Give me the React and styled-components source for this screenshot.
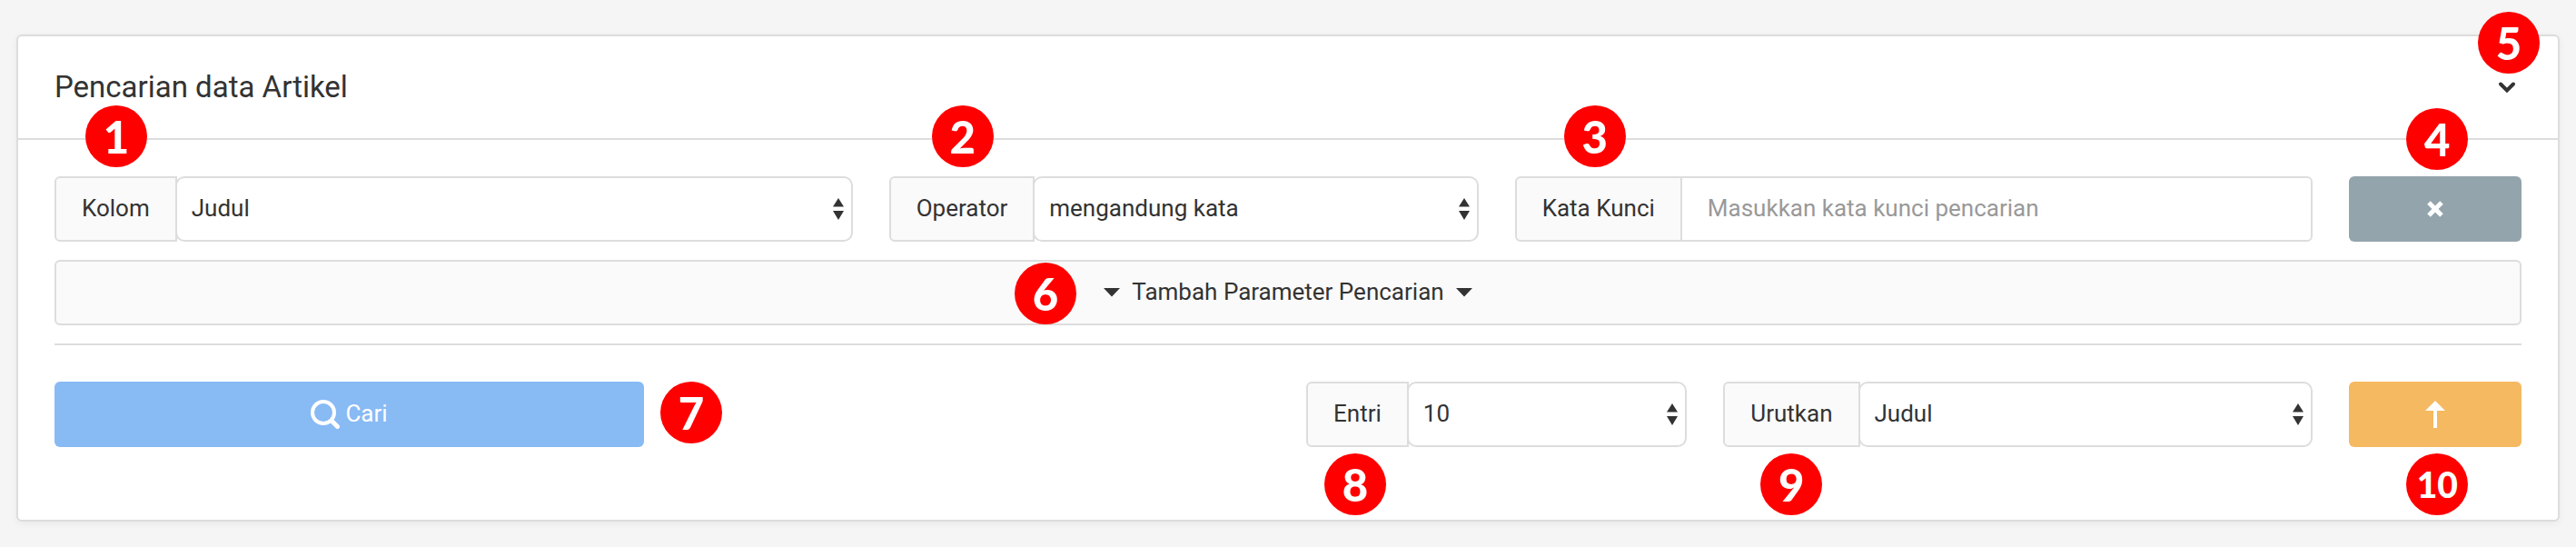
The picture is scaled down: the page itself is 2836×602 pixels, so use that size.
import React from "react";
import styled, { createGlobalStyle } from "styled-components";

const GlobalStyle = createGlobalStyle`
  *, *::before, *::after { box-sizing: border-box; }
  body {
    margin: 0;
    background: #f5f5f5;
    color: #333;
    font: 400 26px/40px Roboto, "Liberation Sans", sans-serif;
  }
`;

const Page = styled.main`
  padding: 38px 18px 28px;
`;

const Panel = styled.section`
  background: #fff;
  border: 2px solid #ddd;
  border-radius: 6px;
  box-shadow: 0 2px 8px rgba(0, 0, 0, 0.06);
`;

const PanelHeader = styled.header`
  display: flex;
  align-items: center;
  justify-content: space-between;
  padding: 30px 40px;
  border-bottom: 2px solid #ddd;
`;

const PanelTitle = styled.h1`
  margin: 0;
  font-size: 33px;
  line-height: 52px;
  font-weight: 400;
`;

const PanelBody = styled.form`
  padding: 40px 40px 80px;
`;

const Row = styled.div`
  display: grid;
  grid-template-columns: repeat(12, minmax(0, 1fr));
  column-gap: 40px;
`;

const Cell = styled.div`
  position: relative;
  display: flex;
  height: 72px;
  grid-column: ${(p) => (p.$start ? `${p.$start} / ` : "")}span ${(p) => p.$span};
`;

const Marker = styled.span`
  position: absolute;
  left: ${(p) => p.$left};
  top: ${(p) => p.$top};
  z-index: 1;
  display: flex;
  align-items: center;
  justify-content: center;
  width: 68px;
  height: 68px;
  border-radius: 50%;
  background: #f00;
  color: #fff;
  font-family: Lato, "Liberation Sans", sans-serif;
  font-weight: 900;
  font-size: ${(p) => (p.$small ? "39px" : "49px")};
  pointer-events: none;
`;

const Addon = styled.label`
  display: flex;
  align-items: center;
  padding: 0 28px 2px;
  border: 2px solid #ddd;
  border-radius: 6px 0 0 6px;
  background: #fafafa;
  white-space: nowrap;
`;

const SelectWrap = styled.div`
  position: relative;
  display: flex;
  flex: 1;
  min-width: 0;
  margin-left: -2px;
`;

const Select = styled.select`
  appearance: none;
  width: 100%;
  padding: 0 40px 2px 16px;
  border: 2px solid #ddd;
  border-radius: 10px;
  background: #fff;
  color: inherit;
  font: inherit;
`;

const SelectArrows = styled.svg`
  position: absolute;
  right: 10px;
  top: 24px;
  width: 12px;
  height: 24px;
  fill: #333;
  pointer-events: none;
`;

const TextInput = styled.input`
  flex: 1;
  min-width: 0;
  margin-left: -2px;
  padding: 0 28px 2px;
  border: 2px solid #ddd;
  border-radius: 0 6px 6px 0;
  background: #fff;
  color: inherit;
  font: inherit;
  &::placeholder {
    color: #999;
    opacity: 1;
  }
`;

const buttonColors = {
  primary: "#88baf4",
  muted: "#94a4ac",
  warning: "#f5b961",
};

const Button = styled.button`
  display: flex;
  align-items: center;
  justify-content: center;
  gap: 6px;
  width: 100%;
  padding: 0;
  border: 0;
  border-radius: 6px;
  background: ${(p) => buttonColors[p.$tone]};
  color: #fff;
  font: inherit;
`;

const ButtonText = styled.span`
  padding-bottom: 2px;
`;

const AddBar = styled.div`
  position: relative;
  margin: 20px 0;
`;

const AddButton = styled.button`
  display: flex;
  align-items: center;
  justify-content: center;
  gap: 13px;
  width: 100%;
  height: 72px;
  padding: 0;
  border: 2px solid #ddd;
  border-radius: 6px;
  background: #fafafa;
  color: inherit;
  font: inherit;
`;

const Divider = styled.hr`
  margin: 0 0 40px;
  border: 0;
  border-top: 2px solid #ddd;
`;

const ToggleWrap = styled.div`
  position: relative;
  display: flex;
`;

const Toggle = styled.button`
  display: flex;
  align-items: center;
  justify-content: center;
  width: 32px;
  height: 32px;
  padding: 0;
  border: 0;
  background: none;
  color: inherit;
`;

const Caret = () => (
  <svg width="18" height="10" viewBox="0 0 18 10" fill="currentColor" aria-hidden="true">
    <path d="M0 0h18L9 9.500z" />
  </svg>
);

function SelectField({ id, label, options }) {
  return (
    <>
      <Addon htmlFor={id}>{label}</Addon>
      <SelectWrap>
        <Select id={id}>
          {options.map((o) => (
            <option key={o}>{o}</option>
          ))}
        </Select>
        <SelectArrows viewBox="0 0 12 24" aria-hidden="true">
          <path d="M6 0l6 9.500H0zM0 14h12L6 24z" />
        </SelectArrows>
      </SelectWrap>
    </>
  );
}

export default function App() {
  return (
    <>
      <GlobalStyle />
      <Page>
        <Panel>
          <PanelHeader>
            <PanelTitle>Pencarian data Artikel</PanelTitle>
            <ToggleWrap>
              <Toggle type="button" aria-label="Ciutkan panel">
                <svg width="20" height="14" viewBox="0 0 20 14" fill="none" stroke="currentColor" strokeWidth="4" strokeLinecap="round" aria-hidden="true">
                  <path d="M3 3.500L10 10.500L17 3.500" />
                </svg>
              </Toggle>
              <Marker $left="-16px" $top="-67px">5</Marker>
            </ToggleWrap>
          </PanelHeader>
          <PanelBody onSubmit={(e) => e.preventDefault()}>
            <Row>
              <Cell $span={4}>
                <SelectField id="kolom" label="Kolom" options={["Judul"]} />
                <Marker $left="34px" $top="-78px">1</Marker>
              </Cell>
              <Cell $span={3}>
                <SelectField id="operator" label="Operator" options={["mengandung kata"]} />
                <Marker $left="47px" $top="-78px">2</Marker>
              </Cell>
              <Cell $span={4}>
                <Addon htmlFor="kata-kunci">Kata Kunci</Addon>
                <TextInput id="kata-kunci" type="text" placeholder="Masukkan kata kunci pencarian" />
                <Marker $left="54px" $top="-78px">3</Marker>
              </Cell>
              <Cell $span={1}>
                <Button type="button" $tone="muted" aria-label="Hapus parameter">
                  <svg width="18" height="18" viewBox="0 0 18 18" fill="none" stroke="currentColor" strokeWidth="5" aria-hidden="true">
                    <path d="M2 2L16 16M16 2L2 16" />
                  </svg>
                </Button>
                <Marker $left="63px" $top="-75px">4</Marker>
              </Cell>
            </Row>
            <AddBar>
              <AddButton type="button">
                <Caret />
                <ButtonText>Tambah Parameter Pencarian</ButtonText>
                <Caret />
              </AddButton>
              <Marker $left="calc(50% - 301px)" $top="3px">6</Marker>
            </AddBar>
            <Divider />
            <Row>
              <Cell $span={3}>
                <Button type="submit" $tone="primary">
                  <svg width="32" height="32" viewBox="0 0 32 32" fill="none" stroke="currentColor" strokeLinecap="round" aria-hidden="true">
                    <circle cx="14" cy="14" r="12" strokeWidth="4" />
                    <path d="M23 23L29.500 29.500" strokeWidth="5" />
                  </svg>
                  <ButtonText>Cari</ButtonText>
                </Button>
                <Marker $left="calc(100% + 18px)" $top="0">7</Marker>
              </Cell>
              <Cell $start={7} $span={2}>
                <SelectField id="entri" label="Entri" options={["10"]} />
                <Marker $left="20px" $top="79px">8</Marker>
              </Cell>
              <Cell $span={3}>
                <SelectField id="urutkan" label="Urutkan" options={["Judul"]} />
                <Marker $left="41px" $top="79px">9</Marker>
              </Cell>
              <Cell $span={1}>
                <Button type="button" $tone="warning" aria-label="Urutan naik">
                  <svg width="22" height="30" viewBox="0 0 22 30" fill="currentColor" aria-hidden="true">
                    <path d="M11 0L22 11H13V30H9V11H0z" />
                  </svg>
                </Button>
                <Marker $left="63px" $top="79px" $small>10</Marker>
              </Cell>
            </Row>
          </PanelBody>
        </Panel>
      </Page>
    </>
  );
}
